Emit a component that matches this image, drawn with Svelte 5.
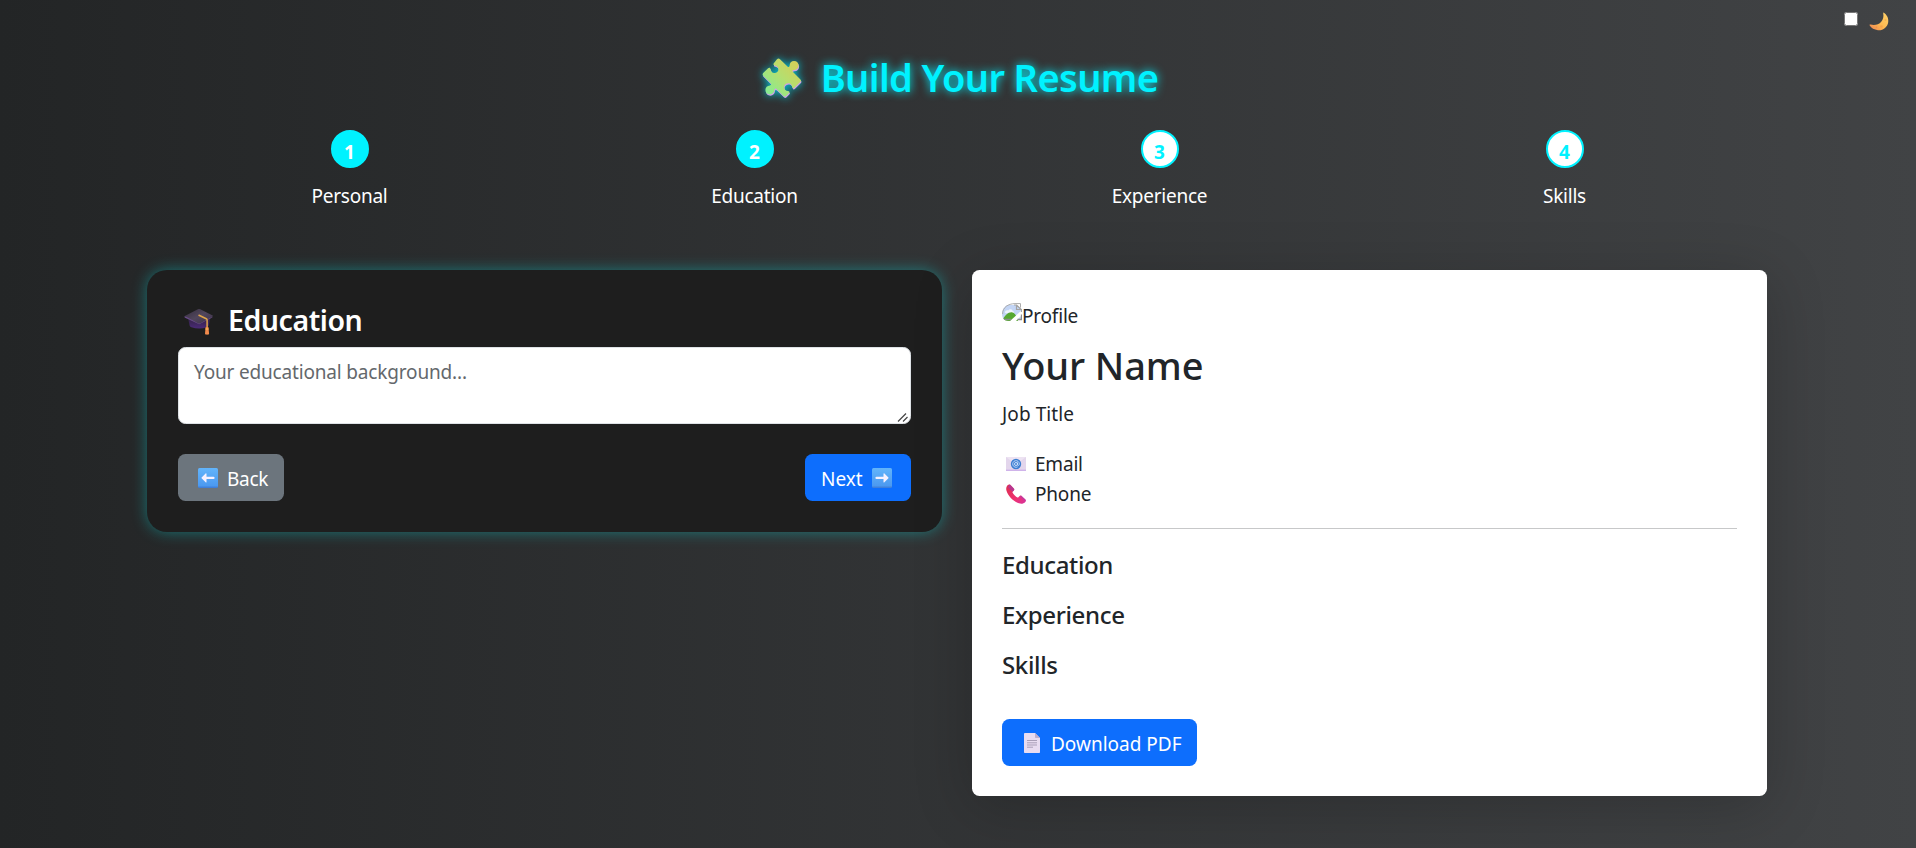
<script>
  const steps = [
    { n: 1, label: 'Personal', active: true },
    { n: 2, label: 'Education', active: true },
    { n: 3, label: 'Experience', active: false },
    { n: 4, label: 'Skills', active: false }
  ];
  const sections = ['Education', 'Experience', 'Skills'];
</script>

<div class="page">
  <label class="theme">
    <input type="checkbox" />
    <svg width="20" height="20" viewBox="0 0 20 20" aria-hidden="true">
      <defs>
        <linearGradient id="moon" x1="1" y1="0" x2="0" y2="1">
          <stop offset="0" stop-color="#ffd36a" />
          <stop offset="0.55" stop-color="#fdb851" />
          <stop offset="1" stop-color="#ef8352" />
        </linearGradient>
      </defs>
      <path d="M14.800.700C18 2.800 19.800 6.300 19.200 10.200c-.7 5-5.300 8.500-10.300 8C5.300 17.900 2.200 16.200.700 13.600c-.4-.8.1-1.200.900-1C9.200 14.300 15.800 9.500 14.200 1.200c-.1-.5.2-.8.6-.5z" fill="url(#moon)" />
      <circle cx="16.500" cy="8" r="1" fill="#ee9f45" opacity=".55" />
      <circle cx="12.500" cy="14.500" r="1.200" fill="#ee9345" opacity=".5" />
      <circle cx="7.500" cy="15.200" r=".8" fill="#e87f45" opacity=".5" />
    </svg>
  </label>

  <h1 class="title">
    <svg class="puzzle" width="40" height="41" viewBox="0 0 40 41" aria-hidden="true">
      <defs>
        <linearGradient id="puz" x1="1" y1="0" x2="0" y2="1">
          <stop offset="0" stop-color="#dccb52" />
          <stop offset="0.5" stop-color="#b4df70" />
          <stop offset="1" stop-color="#78f09a" />
        </linearGradient>
        <path id="piece" d="M15 1.200c1-1 2-1 3 0l7.500 7.300c1 1 2.100.6 2.100-.9 0-2.700 1.800-4.600 4.400-4.600 2.800 0 4.600 1.800 4.600 4.500s-1.900 4.500-4.700 4.500c-1.500 0-2 1-.9 2l7.200 7.200c1 1 1 1.900 0 2.800l-5.600 5.500c-1 1-2.100.8-2.400-.6-.5-2.700-2-4-4.100-3.700-2.800.3-4.300 2.200-3.900 4.500.3 1.900 1.600 3 3.700 3.200 1.700.2 2 1.200.9 2.300l-2.700 2.700c-.9.9-1.800.9-2.700 0l-6.900-6.800c-.9-.9-1.900-.6-2 .7-.1 2.800-2 4.600-4.600 4.600-2.700 0-4.500-1.800-4.500-4.400 0-2.700 1.800-4.500 4.600-4.600 1.400-.1 1.700-1.100.7-2.100L1.200 17.700c-.8-.8-.8-1.700 0-2.600l4.900-4.800c1-1 2.100-.7 2.400.7.5 2.900 2 4.300 4.500 4 2.400-.3 3.700-1.900 3.400-4.200-.3-1.900-1.500-3-3.600-3.400-1.500-.2-1.800-1.300-.8-2.300z" />
      </defs>
      <use href="#piece" x="0.500" y="1.300" fill="#ce9ee9" />
      <use href="#piece" fill="url(#puz)" />
    </svg>
    <span>Build Your Resume</span>
  </h1>

  <ol class="steps">
    {#each steps as s}
      <li>
        <div class="dot" class:active={s.active}>{s.n}</div>
        <div class="label">{s.label}</div>
      </li>
    {/each}
  </ol>

  <main class="columns">
    <section class="form">
      <h3>
        <svg width="30" height="28" viewBox="0 0 30 28" aria-hidden="true">
          <defs>
            <linearGradient id="capTop" x1="0" y1="0" x2="1" y2="1">
              <stop offset="0" stop-color="#352e3d" />
              <stop offset="0.5" stop-color="#51465c" />
              <stop offset="1" stop-color="#3b3048" />
            </linearGradient>
            <linearGradient id="capBase" x1="0" y1="0" x2="0" y2="1">
              <stop offset="0" stop-color="#30223f" />
              <stop offset="1" stop-color="#4b2a78" />
            </linearGradient>
          </defs>
          <path d="M4 9.500l1.600 8c.2.900.8 1.300 1.800 1.700 5 1.800 10.500 1.800 15.500 0 1-.4 1.600-.8 1.800-1.700l1.700-8z" fill="url(#capBase)" />
          <path d="M.800 8.300c-.6.500-.5 1 .2 1.400l14.200 6.500 13.600-7z" fill="#6a4b8a" />
          <path d="M.800 8.100L14.300 1.100c.5-.3 1-.3 1.500 0l12.800 6.400c.6.300.6.800 0 1.100l-12.200 6.700c-.7.400-1.300.4-2 .1z" fill="url(#capTop)" />
          <path d="M15 7.300l7.300 3.500c.6.300.8.800.8 1.400V20" fill="none" stroke="#e0a54a" stroke-width="1.500" stroke-linecap="round" />
          <path d="M21.600 19h2.800l.7 6.800c0 1.200-4 1.200-4.100 0z" fill="#f28a4c" />
          <path d="M21.400 21h3.200" stroke="#ffc25f" stroke-width="1" />
        </svg>
        <span>Education</span>
      </h3>
      <div class="field">
        <textarea placeholder="Your educational background..."></textarea>
        <svg class="grip" width="12" height="11" viewBox="0 0 12 11" aria-hidden="true">
          <path d="M1 9.500L9 1.500M6 9.500L10.500 5" fill="none" stroke="#444" stroke-width="1.200" />
        </svg>
      </div>
      <div class="actions">
        <button class="btn secondary">
          <svg width="20" height="20" viewBox="0 0 20 20" aria-hidden="true">
            <defs>
              <linearGradient id="key" x1="0" y1="0" x2="0" y2="1">
                <stop offset="0" stop-color="#62b4fb" />
                <stop offset="0.88" stop-color="#4c9af0" />
                <stop offset="1" stop-color="#3b78d4" />
              </linearGradient>
            </defs>
            <rect width="20" height="20" rx="1.500" fill="url(#key)" />
            <path d="M3.600 9.500L7.600 5.500c.5-.4.900-.2.900.4v2.900h7a.9.900 0 0 1 0 2.200h-7v2.900c0 .6-.4.800-.9.400l-4-4c-.3-.3-.3-.5 0-.8z" fill="#f6f1ff" />
          </svg>
          <span>Back</span>
        </button>
        <button class="btn primary next">
          <span>Next</span>
          <svg width="20" height="20" viewBox="0 0 20 20" aria-hidden="true">
            <rect width="20" height="20" rx="1.500" fill="url(#key)" />
            <path d="M16.400 9.500L12.400 5.500c-.5-.4-.9-.2-.9.400v2.900h-7a.9.900 0 0 0 0 2.200h7v2.900c0 .6.400.8.900.4l4-4c.3-.3.300-.5 0-.8z" fill="#f6f1ff" />
          </svg>
        </button>
      </div>
    </section>

    <section class="preview">
      <div class="profile">
        <svg width="20" height="18" viewBox="0 0 20 18" aria-hidden="true">
          <defs><clipPath id="round"><path d="M0 11C0 4 6 0 12 0h8v18H6C2.500 18 0 15 0 11z" /></clipPath></defs>
          <g clip-path="url(#round)">
            <path d="M0 2h14l6 5v10H0z" fill="#c3d5f5" />
            <path d="M3 9.500c0-2 2-2.800 3.400-2C7.200 5.500 10.500 6 10.700 8c1.600 0 1.800 2.300.4 2.300H4c-.6 0-1-.3-1-.8z" fill="#eef4fd" />
            <path d="M0 18c3-6 7-9.500 10.500-8.500 2.500.6 4.500 4 5.500 8.500z" fill="#56a832" />
            <path d="M8 18L20 7v5l-6 6z" fill="#fff" />
            <path d="M0 16.500h9M15.500 16.500h4v-5" fill="none" stroke="#8b8b8b" stroke-width="1.300" />
            <path d="M12 2h2.500v4.500h5V9M14.500 2l4.700 4.500" fill="none" stroke="#a3a3a3" stroke-width="1.200" />
          </g>
          <path d="M.600 11C.600 4.500 6 .700 13 .600h5.500v4" fill="none" stroke="#acacac" />
        </svg><span>Profile</span>
      </div>
      <h1>Your Name</h1>
      <p class="job">Job Title</p>
      <div class="contact">
        <svg width="20" height="20" viewBox="0 0 20 20" aria-hidden="true">
          <rect y="3" width="20" height="14" fill="#e3d6ec" />
          <path d="M0 3l10 7.500L20 3z" fill="#ede3f2" />
          <path d="M0 16.300h20" stroke="#cfb3ea" stroke-width="1.400" />
          <circle cx="10" cy="10" r="5.200" fill="#3d7fd2" />
          <circle cx="10" cy="10" r="1.500" fill="none" stroke="#d5e6ff" stroke-width=".9" />
          <path d="M11.500 8.500v2.200c0 1.300 1.800 1 1.800-.8a3.300 3.300 0 1 0-1.600 2.900" fill="none" stroke="#d5e6ff" stroke-width=".8" />
        </svg>
        <span>Email</span>
      </div>
      <div class="contact">
        <svg width="20" height="20" viewBox="0 0 20 20" aria-hidden="true">
          <defs>
            <linearGradient id="tel" x1="0" y1="0" x2="1" y2="1">
              <stop offset="0" stop-color="#dc2d50" />
              <stop offset="0.6" stop-color="#ef3270" />
              <stop offset="1" stop-color="#d6339d" />
            </linearGradient>
          </defs>
          <path d="M1.300 1.600C2.300.400 3.700.100 4.500.900l3.300 3.600c.7.800.6 1.500-.1 2.200L6.300 8c1 2.400 3.200 4.600 5.600 5.700l1.500-1.500c.7-.7 1.500-.8 2.200-.1l3.800 3.300c.8.800.6 2-.4 2.900-1.500 1.500-3.700 1.900-6.100 1C7.100 17.400 2.200 12.200.500 6.800c-.6-2-.3-3.900.8-5.200z" fill="url(#tel)" />
          <path d="M3.500.600l1 .4 3.400 3.600c.6.700.5 1.400-.1 2L6.500 7.800 2 3z" fill="#a93aa0" opacity=".75" />
          <path d="M13.500 12.200c.7-.7 1.400-.7 2.100-.1l3.800 3.300c.5.500.6 1.200.3 1.900z" fill="#b03cae" opacity=".65" />
        </svg>
        <span>Phone</span>
      </div>
      <hr />
      {#each sections as name}
        <h5>{name}</h5>
      {/each}
      <button class="btn primary download">
        <svg width="16" height="20" viewBox="0 0 16 20" aria-hidden="true">
          <path d="M0 .800C0 .300.300 0 .800 0H11l5 5v14.200c0 .5-.3.800-.8.800H.800c-.5 0-.8-.3-.8-.8z" fill="#e8dcf1" />
          <path d="M11 0l5 5h-4.200c-.5 0-.8-.3-.8-.8z" fill="#bfaecb" />
          <path d="M3 7.500h10M3 9.800h10M3 12h10M3 14.200h6" stroke="#aa9fb8" stroke-width="1" />
        </svg>
        <span>Download PDF</span>
      </button>
    </section>
  </main>
</div>

<style>
  :global(body) {
    margin: 0;
    overflow: hidden;
  }
  .page,
  .page * {
    box-sizing: border-box;
  }
  .page {
    position: relative;
    height: 848px;
    padding: 53px 2px 0 0;
    background: linear-gradient(to right, #232526, #414345);
    color: #fff;
    font: 400 19px/30px 'Noto Sans', 'Open Sans', sans-serif;
  }
  svg {
    display: block;
    flex: none;
  }
  h1,
  h3,
  h5,
  p,
  ol {
    margin: 0;
    padding: 0;
  }
  .theme {
    position: absolute;
    top: 12px;
    right: 27px;
    display: flex;
    gap: 11px;
  }
  .theme input {
    width: 14px;
    height: 14px;
    margin: 0;
  }
  .title {
    display: flex;
    justify-content: center;
    gap: 19px;
    height: 48px;
    padding-left: 6px;
    color: #00f2ff;
    font-size: 38px;
    font-weight: 600;
    line-height: 48px;
    letter-spacing: -0.6px;
    text-shadow: 0 0 10px #00f2ff;
  }
  .puzzle {
    margin-top: 5px;
    filter: drop-shadow(0 0 4px #00c8d8);
    overflow: visible;
  }
  .steps {
    display: grid;
    grid-template-columns: repeat(4, 405px);
    justify-content: center;
    margin-top: 29px;
    list-style: none;
    text-align: center;
  }
  .dot {
    width: 38px;
    height: 38px;
    margin: 0 auto;
    border: 2px solid #00f2ff;
    border-radius: 50%;
    background: #fff;
    color: #00f2ff;
    font-weight: 700;
    line-height: 40px;
  }
  .dot.active {
    background: #00f2ff;
    color: #fff;
  }
  .label {
    margin-top: 13px;
    letter-spacing: -0.25px;
  }
  .columns {
    display: grid;
    grid-template-columns: 795px 795px;
    align-items: start;
    justify-content: center;
    gap: 30px;
    margin-top: 59px;
  }
  .form {
    height: 262px;
    padding: 30px 31px;
    border-radius: 20px;
    background: #1e1e1e;
    box-shadow: 0 0 15px rgba(0, 255, 255, 0.35);
  }
  .form h3 {
    display: flex;
    gap: 14px;
    height: 47px;
    padding-left: 6px;
    font-size: 28.5px;
    font-weight: 600;
    line-height: 40px;
    letter-spacing: -0.45px;
  }
  .form h3 svg {
    margin-top: 8px;
  }
  .field {
    position: relative;
  }
  .grip {
    position: absolute;
    right: 2px;
    bottom: 1px;
    pointer-events: none;
  }
  textarea {
    display: block;
    width: 100%;
    height: 77px;
    padding: 9px 15px;
    border: 1px solid #dee2e6;
    border-radius: 7.5px;
    background: #fff;
    font: inherit;
    letter-spacing: -0.17px;
    resize: none;
  }
  textarea::placeholder {
    color: #64686c;
    opacity: 1;
  }
  .actions {
    display: flex;
    justify-content: space-between;
    margin-top: 30px;
  }
  .btn {
    display: flex;
    align-items: center;
    gap: 9px;
    width: 106px;
    height: 47px;
    padding: 0 0 0 20px;
    border: 0;
    border-radius: 7.5px;
    color: #fff;
    font: inherit;
    white-space: nowrap;
  }
  .btn span {
    padding-top: 2px;
  }
  .secondary {
    background: #6c757d;
    letter-spacing: -0.3px;
  }
  .primary {
    background: #0d6efd;
  }
  .next {
    padding-left: 16px;
  }
  .preview {
    height: 526px;
    padding: 30px;
    border-radius: 7.5px;
    background: #fff;
    color: #212529;
    box-shadow: 0 10px 60px rgba(0, 0, 0, 0.2);
  }
  .profile {
    display: flex;
    letter-spacing: -0.2px;
  }
  .profile svg {
    margin-top: 3px;
  }
  .profile span {
    padding-top: 1px;
  }
  .preview h1 {
    margin-top: 10px;
    font-size: 38px;
    font-weight: 500;
    line-height: 48px;
    letter-spacing: -0.1px;
  }
  .job {
    margin: 10px 0 20px;
    letter-spacing: 0.1px;
  }
  .contact {
    display: flex;
    align-items: center;
    gap: 9px;
    padding-left: 4px;
    letter-spacing: -0.2px;
  }
  hr {
    height: 1px;
    margin: 19px 0 21px;
    border: 0;
    background: #c7c8c9;
  }
  h5 {
    margin-bottom: 20px;
    font-size: 24px;
    font-weight: 500;
    line-height: 30px;
    letter-spacing: -0.35px;
  }
  .download {
    width: 195px;
    margin-top: 39px;
    padding-left: 22px;
    gap: 11px;
  }
</style>
